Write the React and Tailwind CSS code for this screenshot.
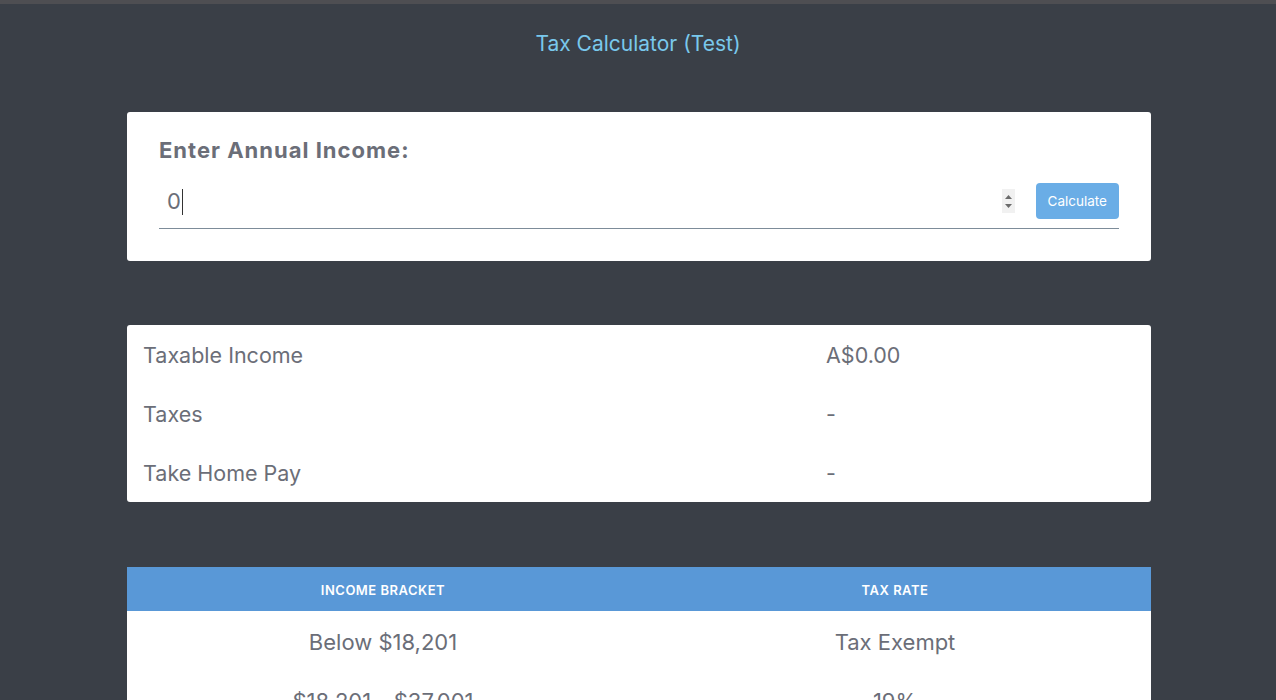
import React from "react"

const brackets = [
  { range: "Below $18,201", rate: "Tax Exempt" },
  { range: "$18,201 - $37,001", rate: "19%" },
  { range: "$37,001 - $90,001", rate: "32.5%" },
  { range: "$90,001 - $180,001", rate: "37%" },
  { range: "Above $180,001", rate: "45%" },
]

const summary = [
  { label: "Taxable Income", value: "A$0.00" },
  { label: "Taxes", value: "-" },
  { label: "Take Home Pay", value: "-" },
]

export default function App() {
  return (
    <div className="min-h-screen bg-[#3a3f47] font-['Inter','Noto_Sans',sans-serif] border-t-[4px] border-[#4e4e52]">
      {/* Title */}
      <h1 className="h-[76px] pt-[24px] text-center text-[21px] leading-[32px] text-[#79c8ec]">
        Tax Calculator (Test)
      </h1>

      <div className="ml-[127px] w-[1024px] pt-[32px] pb-10">
        {/* Income form */}
        <div className="bg-white rounded-[3px] px-[32px] pt-[24px] pb-[32px]">
          <label className="block text-[22px] leading-[28px] font-bold tracking-[1px] text-[#6b6e78]">
            Enter Annual Income:
          </label>
          <div className="mt-[8px] h-[57px] flex items-center border-b border-[#7d8c99]">
            <div className="flex-1 flex items-center pl-[8px] pt-[3px] text-[22px] text-[#6b6e78]">
              <span>0</span>
              <span className="w-px h-[26px] bg-[#333] ml-[1px]" />
            </div>
            <div className="w-[13px] h-[24px] mt-[2px] bg-[#f1f1f1] flex flex-col items-center justify-center gap-[5px] mr-[21px]">
              <svg width="7" height="4" viewBox="0 0 7 4"><path d="M0 4 L3.5 0 L7 4 Z" fill="#6b6b6b" /></svg>
              <svg width="7" height="4" viewBox="0 0 7 4"><path d="M0 0 L3.5 4 L7 0 Z" fill="#6b6b6b" /></svg>
            </div>
            <button className="h-[36px] mt-[2px] px-[12px] rounded-[4px] bg-[#6aade6] text-white text-[13.5px]">
              Calculate
            </button>
          </div>
        </div>

        {/* Summary */}
        <div className="mt-[64px] bg-white rounded-[3px]">
          {summary.map((row) => (
            <div key={row.label} className="h-[59px] pt-[2px] grid grid-cols-[683px_1fr] items-center pl-[16px] text-[21.5px] text-[#6b6e78]">
              <span>{row.label}</span>
              <span>{row.value}</span>
            </div>
          ))}
        </div>

        {/* Brackets table */}
        <table className="mt-[65px] w-full bg-white table-fixed">
          <thead>
            <tr className="bg-[#5998d7] h-[44px] text-white text-[13px] tracking-[0.5px] font-semibold uppercase">
              <th className="font-semibold pt-[4px]">Income Bracket</th>
              <th className="font-semibold pt-[4px]">Tax Rate</th>
            </tr>
          </thead>
          <tbody>
            {brackets.map((b) => (
              <tr key={b.range} className="h-[59px] text-[22px] text-[#6b6e78] text-center">
                <td className="pt-[4px]">{b.range}</td>
                <td className="pt-[4px]">{b.rate}</td>
              </tr>
            ))}
          </tbody>
        </table>
      </div>
    </div>
  )
}
